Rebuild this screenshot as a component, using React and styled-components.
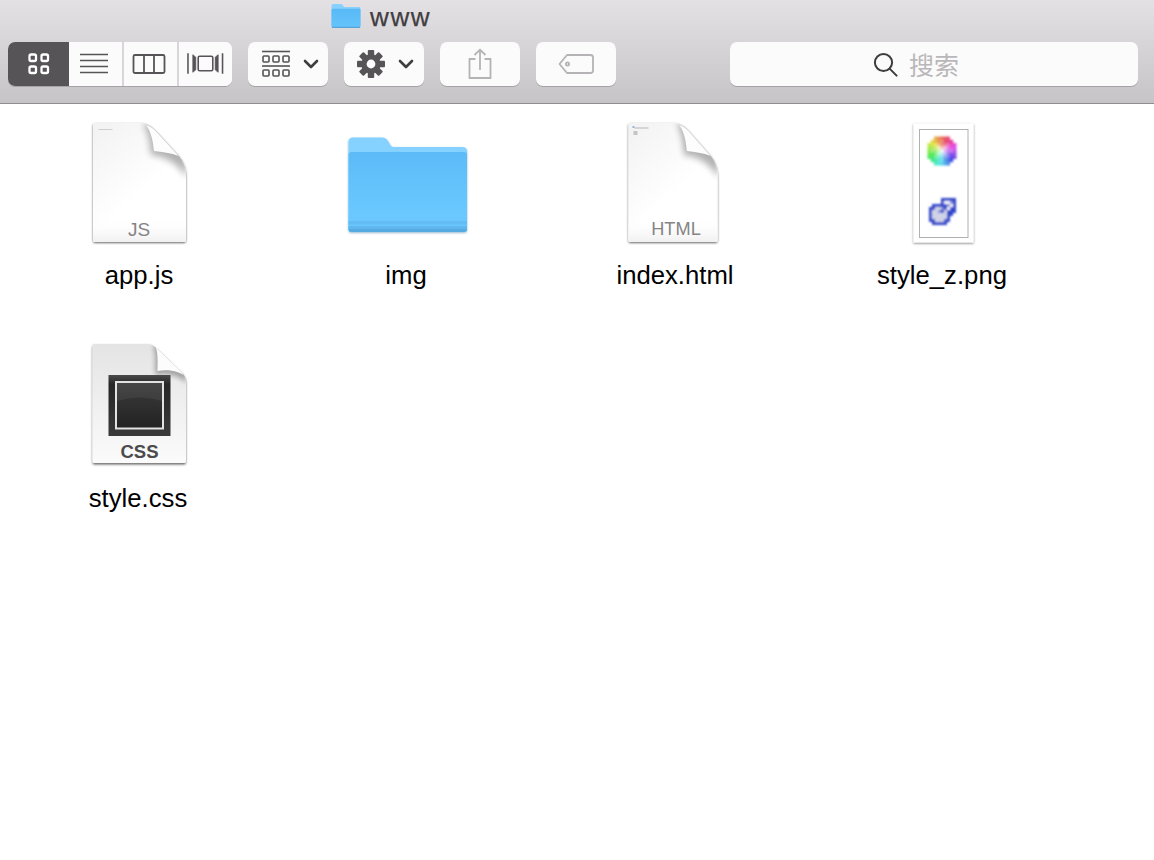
import React from 'react';
import styled, { createGlobalStyle } from 'styled-components';

const Global = createGlobalStyle`
  html, body { margin: 0; padding: 0; background: #fff; }
  body { font-family: "Liberation Sans", Arial, "Noto Sans CJK SC", sans-serif; overflow: hidden; }
`;

const Window = styled.div`
  width: 1154px;
  height: 860px;
  background: #fff;
  display: flex;
  flex-direction: column;
`;
const Toolbar = styled.header`
  height: 103px;
  box-sizing: content-box;
  border-bottom: 1px solid #8e8c8e;
  background: linear-gradient(#e4e1e4, #c7c4c7);
  display: flex;
  flex-direction: column;
`;
const TitleRow = styled.div`
  height: 42px;
  padding: 3px 0 0 331px;
  box-sizing: border-box;
  display: flex;
  align-items: flex-start;
  gap: 9px;
`;
const TitleText = styled.span`
  font-size: 26px;
  line-height: 28px;
  letter-spacing: 1.6px;
  color: #413d41;
  -webkit-text-stroke: 0.25px #413d41;
`;
const ButtonRow = styled.div`
  height: 44px;
  padding: 0 16px 0 8px;
  display: flex;
  align-items: stretch;
  gap: 16px;
`;
const Segmented = styled.div`
  width: 224px;
  display: flex;
  border-radius: 7px;
  overflow: hidden;
  background: #fbfbfb;
  box-shadow: 0 1px 0 #a5a3a5;
`;
const Segment = styled.div`
  width: ${p => p.$w}px;
  display: flex;
  align-items: center;
  justify-content: center;
  box-sizing: border-box;
  background: ${p => (p.$active ? '#565456' : '#fbfbfb')};
  border-left: ${p => (p.$divide ? '2px solid #d8d6d8' : 'none')};
  padding-right: ${p => p.$pr || 0}px;
`;
const ToolButton = styled.div`
  width: 80px;
  border-radius: 7px;
  background: #fbfbfb;
  box-shadow: 0 1px 0 #a5a3a5;
  display: flex;
  align-items: center;
  justify-content: center;
  gap: ${p => p.$gap || 0}px;
  padding-left: ${p => p.$pl || 0}px;
  box-sizing: border-box;
`;
const SearchField = styled.div`
  width: 408px;
  margin-left: 98px;
  border-radius: 7px;
  background: #fbfbfb;
  box-shadow: 0 1px 0 #a5a3a5;
  display: flex;
  align-items: center;
  justify-content: center;
  gap: 11px;
  padding-right: 36px;
  box-sizing: border-box;
`;
const SearchText = styled.span`
  font-family: "Noto Sans CJK SC", sans-serif;
  font-size: 25px;
  line-height: 30px;
  color: #b9b7b9;
`;
const Grid = styled.main`
  padding: 11px 0 0 5px;
  display: grid;
  grid-template-columns: repeat(4, 268px);
  grid-auto-rows: 223px;
`;
const Item = styled.div`
  display: flex;
  flex-direction: column;
  align-items: center;
`;
const IconSvg = styled.svg`
  display: block;
  flex: none;
`;
const Label = styled.div`
  margin-top: 10px;
  font-size: 25.7px;
  line-height: 30px;
  color: #000;
  transform: translateX(${p => p.$shift || 0}px);
`;

const dark = '#565456';
const light = '#b5b3b5';

const GridIcon = () => (
  <IconSvg width="22" height="22" viewBox="0 0 22 22" fill="none" stroke="#fff" strokeWidth="2.3">
    {[[1.5, 1.5], [13.5, 1.5], [1.5, 13.5], [13.5, 13.5]].map(([x, y]) => <rect key={x + '-' + y} x={x} y={y} width="6.5" height="6.5" rx="1.6" />)}
  </IconSvg>
);
const ListIcon = () => (
  <IconSvg width="30" height="22" viewBox="0 0 30 22" stroke={dark} strokeWidth="1.7">
    {[1.5, 7.5, 13.5, 19.5].map(y => <line key={y} x1="1" x2="29" y1={y} y2={y} />)}
  </IconSvg>
);
const ColumnsIcon = () => (
  <IconSvg width="34" height="22" viewBox="0 0 34 22" fill="none" stroke={dark} strokeWidth="1.8">
    <rect x="1.500" y="2" width="31" height="18" rx="1.5" />
    <line x1="12" x2="12" y1="2" y2="20" />
    <line x1="22" x2="22" y1="2" y2="20" />
  </IconSvg>
);
const CoverIcon = () => (
  <IconSvg width="37" height="24" viewBox="0 0 38 24" fill="none" stroke={dark} strokeWidth="1.6">
    <rect x="11.5" y="4" width="15" height="15" rx="1.5" />
    <line x1="1" x2="1" y1="1" y2="22" />
    <line x1="36.5" x2="36.5" y1="1" y2="22" />
    <path d="M6 2.5 L9 5 V18 L6 20.5 Z" fill={dark} strokeWidth="0.8" />
    <path d="M32 2.5 L29 5 V18 L32 20.5 Z" fill={dark} strokeWidth="0.8" />
  </IconSvg>
);
const Chevron = () => (
  <IconSvg width="16" height="10" viewBox="0 0 16 10" fill="none" stroke="#3f3d3f" strokeWidth="2.6" strokeLinecap="round" strokeLinejoin="round">
    <path d="M2 2 L8 8 L14 2" />
  </IconSvg>
);
const ArrangeIcon = () => (
  <IconSvg width="30" height="28" viewBox="0 0 30 28" fill="none" stroke={dark} strokeWidth="1.6">
    <line x1="1" x2="29" y1="1.5" y2="1.5" />
    <line x1="1" x2="29" y1="16" y2="16" />
    {[6, 20].map(y => [2, 12, 22].map(x => <rect key={x + '-' + y} x={x} y={y} width="6" height="6" rx="1" />))}
  </IconSvg>
);
const GearIcon = () => (
  <IconSvg width="30" height="30" viewBox="0 0 30 30">
    {[0, 45, 90, 135].map(a => <rect key={a} x="11.8" y="1" width="6.4" height="28" rx="1" fill={dark} transform={`rotate(${a} 15 15)`} />)}
    <circle cx="15" cy="15" r="7.2" fill="none" stroke={dark} strokeWidth="5" />
    <circle cx="15" cy="15" r="4.4" fill="#fbfbfb" />
  </IconSvg>
);
const ShareIcon = () => (
  <IconSvg width="26" height="32" viewBox="0 0 26 32" fill="none" stroke={light} strokeWidth="1.8">
    <path d="M8.5 11 H2.5 V30 H23.5 V11 H17.5" />
    <path d="M13 22 V2 M7.5 7 L13 1.8 L18.5 7" />
  </IconSvg>
);
const TagIcon = () => (
  <IconSvg width="36" height="20" viewBox="0 0 36 20" fill="none" stroke={light} strokeWidth="1.8">
    <path d="M9 1 H32.5 Q35 1 35 3.5 V16.5 Q35 19 32.5 19 H9 L1.5 10 Z" strokeLinejoin="round" />
    <circle cx="9.5" cy="10" r="1.6" />
  </IconSvg>
);
const SearchIcon = () => (
  <IconSvg width="25" height="25" viewBox="0 0 25 25" fill="none" stroke="#3e3c3e" strokeWidth="2">
    <circle cx="10.5" cy="10.5" r="8.6" />
    <line x1="16.6" y1="16.6" x2="23.6" y2="23.6" strokeLinecap="round" />
  </IconSvg>
);
const TitleFolder = () => (
  <IconSvg width="30" height="25" viewBox="0 1 30 25">
    <defs>
      <linearGradient id="tf" x1="0" y1="0" x2="0" y2="1"><stop offset="0" stopColor="#58b9f6" /><stop offset="1" stopColor="#66c4fb" /></linearGradient>
    </defs>
    <path d="M0.5 4 Q0.5 2 2.5 2 H10 Q11 2 12 3.500 L13 5 H28 Q29.5 5 29.5 6.500 V24 Q29.5 25.5 28 25.5 H2 Q0.5 25.5 0.5 24 Z" fill="#88d0fd" />
    <path d="M0.5 8 Q0.5 6.8 2 6.8 H28 Q29.5 6.8 29.5 8 V24 Q29.5 25.5 28 25.5 H2 Q0.5 25.5 0.5 24 Z" fill="url(#tf)" />
    <rect x="1" y="24.800" width="28" height="1" fill="#4a9ad4" />
  </IconSvg>
);

const docOutline = 'M15 8 H60 C67 8 71 11 76 16 L99 41 C104 47 106 53 106 62 V125 Q106 127 104 127 H15 Q13 127 13 125 V10 Q13 8 15 8 Z';
const flap = 'M66 10 C72 18 73 28 74 36 C82 37 91 38 99 41 L76 16 C72 12 69 10.500 66 10 Z';
const Page = ({ id, children, narrow }) => (
  <>
    <defs>
      <filter id={`${id}s`} x="-15%" y="-15%" width="130%" height="130%">
        <feDropShadow dx="0" dy="1" stdDeviation="1.1" floodColor="#000" floodOpacity="0.6" />
      </filter>
      <filter id={`${id}f`} x="-60%" y="-60%" width="220%" height="220%">
        <feGaussianBlur stdDeviation="3.5" />
      </filter>
      <clipPath id={`${id}c`}><path d={docOutline} /></clipPath>
      <linearGradient id={`${id}g`} x1="0.1" y1="0" x2="0.5" y2="0.6">
        <stop offset="0" stopColor="#f3f3f3" />
        <stop offset="1" stopColor="#fff" />
      </linearGradient>
      <linearGradient id={`${id}b`} x1="0" y1="0" x2="0" y2="1">
        <stop offset="0.8" stopColor="#fff" stopOpacity="0" />
        <stop offset="1" stopColor="#f0f0f0" />
      </linearGradient>
    </defs>
    <g transform={narrow ? 'translate(57.5 0) scale(.96 1) translate(-59.5 0)' : 'translate(0.5 0)'}>
      <path d={docOutline} fill={`url(#${id}g)`} filter={`url(#${id}s)`} />
      <path d={docOutline} fill={`url(#${id}b)`} />
      <g clipPath={`url(#${id}c)`}>
        <path d="M63 9 C70 18 70 32 71 40 C82 41 93 44 107 62 L107 40 L76 8 Z" fill="#000" opacity="0.3" filter={`url(#${id}f)`} />
      </g>
      <path d={flap} fill="#fdfdfd" />
      <path d="M99 41 L76 16 C72 12 69 10.500 66 10" fill="none" stroke="#d5d5d5" strokeWidth="1" />
    </g>
    {children}
  </>
);
const DocLabel = styled.text`
  font-family: "Liberation Sans", Arial, sans-serif;
  font-size: ${p => p.$size}px;
  font-weight: ${p => p.$weight || 400};
  fill: ${p => p.$color};
  text-anchor: middle;
`;
const JsIcon = () => (
  <IconSvg width="120" height="135" viewBox="-0.500 0 120 135">
    <Page id="js">
      <rect x="19" y="14" width="14" height="1" fill="#cfcfcf" />
      <DocLabel x="59.5" y="121" $size="19" $color="#868486">JS</DocLabel>
    </Page>
  </IconSvg>
);
const HtmlIcon = () => (
  <IconSvg width="120" height="135" viewBox="-0.500 0 120 135">
    <Page id="ht" narrow>
      <rect x="17" y="11" width="2" height="2" fill="#8fb4e0" />
      <rect x="19" y="12.5" width="14" height="1" fill="#b5b5b5" />
      <rect x="18" y="16" width="4" height="4" fill="#c4c4c4" />
      <DocLabel x="60.5" y="120" $size="18.200" $color="#868486">HTML</DocLabel>
    </Page>
  </IconSvg>
);
const FolderIcon = () => (
  <IconSvg width="140" height="135" viewBox="-3 -10 140 135">
    <defs>
      <linearGradient id="ff" x1="0" y1="0" x2="0" y2="1">
        <stop offset="0" stopColor="#5cbaf7" />
        <stop offset="0.75" stopColor="#6ac8ff" />
      </linearGradient>
      <filter id="fs" x="-5%" y="-5%" width="110%" height="110%">
        <feDropShadow dx="0" dy="1" stdDeviation="0.8" floodColor="#1b5f90" floodOpacity="0.45" />
      </filter>
    </defs>
    <path d="M8.5 17 Q8.5 12.5 13 12.5 H42 Q46 12.5 48 16 L51 21 Q52 22 54 22 H122 Q127 22 127 26 V104 Q127 107 124 107 H11.5 Q8.5 107 8.5 104 Z" fill="#85d1ff" filter="url(#fs)" />
    <path d="M8.5 30 Q8.5 27 11.5 27 H124 Q127 27 127 30 V104 Q127 107 124 107 H11.5 Q8.5 107 8.5 104 Z" fill="url(#ff)" />
    <rect x="8.500" y="96" width="118.5" height="3.5" fill="#63bdf4" />
    <rect x="8.500" y="101" width="118.5" height="3" fill="#5fb7ee" />
    <path d="M8.5 104 Q8.5 107 11.5 107 H124 Q127 107 127 104 Z" fill="#55aae2" />
  </IconSvg>
);

const wheelCells = [];
for (let j = 0; j < 9; j++) {
  for (let i = 0; i < 9; i++) {
    const dx = i - 4;
    const dy = j - 4;
    const r = Math.hypot(dx, dy);
    if (r > 4.55) continue;
    const hue = (Math.atan2(dx, -dy) * -180 / Math.PI + 370) % 360;
    const lit = r < 0.8 ? 96 : r < 1.8 ? 82 : r < 3.1 ? 68 : 58;
    wheelCells.push({ x: 27.6 + i * 3.2, y: 21.6 + j * 3.2, c: `hsl(${hue} 78% ${lit}%)` });
  }
}
const PixelMap = [
  '....BBBBB',
  '....BwwdB',
  '.BBBBBdwB',
  'BBssdBwBB',
  'BssdBsBBB',
  'BsssssBB.',
  'BsssssB..',
  'BBsssBB..',
  '.BBBBB...',
];
const pixelColors = { B: '#3346c9', w: '#f4f6ff', d: '#7f8cd8', s: '#cfd3e8' };
const PngIcon = () => (
  <IconSvg width="120" height="135" viewBox="-17 0 120 135">
    <defs>
      <filter id="ps" x="-15%" y="-10%" width="130%" height="120%">
        <feDropShadow dx="0" dy="1" stdDeviation="1.3" floodColor="#000" floodOpacity="0.5" />
      </filter>
      <filter id="px" x="-10%" y="-10%" width="120%" height="120%">
        <feGaussianBlur stdDeviation="0.8" />
      </filter>
    </defs>
    <rect x="13.5" y="8.5" width="60" height="119" fill="#fff" filter="url(#ps)" />
    <rect x="19.5" y="14.5" width="48.5" height="108" fill="#fff" stroke="#b0b0b0" />
    <g filter="url(#px)">
      {wheelCells.map(c => <rect key={c.x + '-' + c.y} x={c.x} y={c.y} width="3.2" height="3.2" fill={c.c} />)}
    </g>
    <g filter="url(#px)">
      {PixelMap.map((row, j) => row.split('').map((ch, i) => (
        ch === '.' ? null : <rect key={i + '-' + j} x={29 + i * 3} y={83 + j * 3} width="3" height="3" fill={pixelColors[ch]} />
      )))}
    </g>
  </IconSvg>
);
const CssIcon = () => (
  <IconSvg width="120" height="135" viewBox="-0.500 3 120 135">
    <defs>
      <filter id="cs" x="-15%" y="-15%" width="130%" height="130%">
        <feDropShadow dx="0" dy="1.5" stdDeviation="1" floodColor="#000" floodOpacity="0.6" />
      </filter>
      <filter id="cb" x="-60%" y="-60%" width="220%" height="220%">
        <feGaussianBlur stdDeviation="2.5" />
      </filter>
      <linearGradient id="cg" x1="0" y1="0" x2="0" y2="1">
        <stop offset="0" stopColor="#e4e4e4" />
        <stop offset="1" stopColor="#fbfbfb" />
      </linearGradient>
      <linearGradient id="cd" x1="0" y1="0" x2="0" y2="1">
        <stop offset="0" stopColor="#3c3c3c" />
        <stop offset="1" stopColor="#222" />
      </linearGradient>
      <linearGradient id="co" x1="0" y1="0" x2="0" y2="1">
        <stop offset="0" stopColor="#4a4a4a" />
        <stop offset="0.15" stopColor="#262626" />
        <stop offset="1" stopColor="#3a3a3a" />
      </linearGradient>
      <clipPath id="cc"><path d="M15 9 H68 C72 9 75 11 78 14 L102 37 C105 40 106.500 43 106.500 46 V126 Q106.500 128 104.500 128 H15 Q13 128 13 126 V11 Q13 9 15 9 Z" /></clipPath>
    </defs>
    <path d="M15 9 H68 C72 9 75 11 78 14 L102 37 C105 40 106.500 43 106.500 46 V126 Q106.500 128 104.500 128 H15 Q13 128 13 126 V11 Q13 9 15 9 Z" fill="url(#cg)" filter="url(#cs)" />
    <g clipPath="url(#cc)">
      <path d="M74 10 C77 22 75 32 76 40 C88 38 98 40 107 48 L107 30 L80 8 Z" fill="#000" opacity="0.3" filter="url(#cb)" />
    </g>
    <path d="M76 11 C79 20 78 30 78 36 C88 34 98 36 104 40 L102 37 L78 14 Z" fill="#fcfcfc" />
    <rect x="29" y="40" width="62" height="61" fill="url(#co)" />
    <rect x="36.500" y="47" width="47" height="46.500" fill="url(#cd)" stroke="#e2e2e2" strokeWidth="2" />
    <path d="M37.500 66 Q60 59 82.500 66 V48 H37.500 Z" fill="#fff" fillOpacity="0.06" />
    <DocLabel x="60" y="123" $size="18.500" $weight="700" $color="#4b4b4b">CSS</DocLabel>
  </IconSvg>
);

const files = [
  { name: 'app.js', Icon: JsIcon },
  { name: 'img', Icon: FolderIcon, shift: -1 },
  { name: 'index.html', Icon: HtmlIcon },
  { name: 'style_z.png', Icon: PngIcon, shift: -1 },
  { name: 'style.css', Icon: CssIcon, shift: -1 },
];

export default function App() {
  return (
    <Window>
      <Global />
      <Toolbar>
        <TitleRow>
          <TitleFolder />
          <TitleText>www</TitleText>
        </TitleRow>
        <ButtonRow>
          <Segmented>
            <Segment $w={61} $active><GridIcon /></Segment>
            <Segment $w={53} $pr={3}><ListIcon /></Segment>
            <Segment $w={55} $divide $pr={3}><ColumnsIcon /></Segment>
            <Segment $w={55} $divide><CoverIcon /></Segment>
          </Segmented>
          <ToolButton $gap={12} $pl={4}><ArrangeIcon /><Chevron /></ToolButton>
          <ToolButton $gap={12} $pl={2}><GearIcon /><Chevron /></ToolButton>
          <ToolButton><ShareIcon /></ToolButton>
          <ToolButton><TagIcon /></ToolButton>
          <SearchField>
            <SearchIcon />
            <SearchText>搜索</SearchText>
          </SearchField>
        </ButtonRow>
      </Toolbar>
      <Grid>
        {files.map(({ name, Icon, shift }) => (
          <Item key={name}>
            <Icon />
            <Label $shift={shift}>{name}</Label>
          </Item>
        ))}
      </Grid>
    </Window>
  );
}
